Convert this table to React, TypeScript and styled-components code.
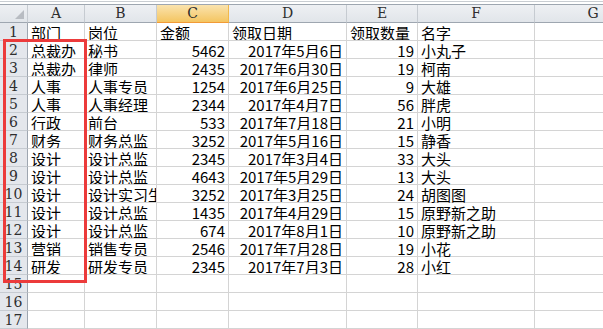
import { Fragment } from "react";
import styled, { createGlobalStyle } from "styled-components";

const GlobalStyle = createGlobalStyle`
  html, body {
    margin: 0;
    padding: 0;
    background: #fff;
    overflow: hidden;
  }
  body {
    font-family: "Noto Sans CJK SC", "Noto Sans", sans-serif;
  }
`;

const COLS = [28, 57, 72, 72, 118, 71, 117, 117];
const LETTERS = ["A", "B", "C", "D", "E", "F", "G"];

type Row = [string, string, string, string, string, string];

const rows: Row[] = [
  ["部门", "岗位", "金额", "领取日期", "领取数量", "名字"],
  ["总裁办", "秘书", "5462", "2017年5月6日", "19", "小丸子"],
  ["总裁办", "律师", "2435", "2017年6月30日", "19", "柯南"],
  ["人事", "人事专员", "1254", "2017年6月25日", "9", "大雄"],
  ["人事", "人事经理", "2344", "2017年4月7日", "56", "胖虎"],
  ["行政", "前台", "533", "2017年7月18日", "21", "小明"],
  ["财务", "财务总监", "3252", "2017年5月16日", "15", "静香"],
  ["设计", "设计总监", "2345", "2017年3月4日", "33", "大头"],
  ["设计", "设计总监", "4643", "2017年5月29日", "13", "大头"],
  ["设计", "设计实习生", "3252", "2017年3月25日", "24", "胡图图"],
  ["设计", "设计总监", "1435", "2017年4月29日", "15", "原野新之助"],
  ["设计", "设计总监", "674", "2017年8月1日", "10", "原野新之助"],
  ["营销", "销售专员", "2546", "2017年7月28日", "19", "小花"],
  ["研发", "研发专员", "2345", "2017年7月3日", "28", "小红"],
];

const TOTAL_ROWS = 17;

const Page = styled.div`
  position: relative;
  width: 603px;
  height: 329px;
  overflow: hidden;
`;

const TopStrip = styled.div`
  height: 5px;
  box-sizing: border-box;
  border-bottom: 1px solid #9ea6b0;
  background: linear-gradient(
    to bottom,
    #fff 0px,
    #fff 1px,
    #c9cdd2 1px,
    #c9cdd2 2px,
    #fff 2px
  );
`;

const Grid = styled.div`
  display: grid;
  grid-template-columns: ${COLS.map((c) => `${c}px`).join(" ")};
  grid-auto-rows: 18px;
`;

const HeadCell = styled.div<{ $selected?: boolean }>`
  box-sizing: border-box;
  border-right: 1px solid ${(p) => (p.$selected ? "#f2b94b" : "#c6cbd1")};
  border-bottom: 1px solid ${(p) => (p.$selected ? "#f29a36" : "#9ea6b0")};
  background: ${(p) =>
    p.$selected
      ? "linear-gradient(to bottom, #fae3ae, #f4c561)"
      : "linear-gradient(to bottom, #eef0f3, #e1e5ea)"};
  color: #2e2e2e;
  font-size: 14px;
  line-height: 17px;
  text-align: center;
  font-family: "DejaVu Serif", "Liberation Serif", serif;
`;

const Corner = styled(HeadCell)`
  position: relative;
  &::after {
    content: "";
    position: absolute;
    right: 3px;
    bottom: 3px;
    width: 0;
    height: 0;
    border-left: 9px solid transparent;
    border-bottom: 9px solid #b8bcc2;
  }
`;

const RowHead = styled.div`
  box-sizing: border-box;
  border-right: 1px solid #9ea6b0;
  border-bottom: 1px solid #c6cbd1;
  background: #e4e7ec;
  color: #2e2e2e;
  font-size: 14px;
  line-height: 18px;
  text-align: center;
  font-family: "DejaVu Serif", "Liberation Serif", serif;
`;

const Cell = styled.div<{ $right?: boolean; $overflow?: boolean }>`
  box-sizing: border-box;
  border-right: 1px solid #d4d4d4;
  border-bottom: 1px solid #d4d4d4;
  padding: 1px 3px 0;
  font-size: 15px;
  line-height: 17px;
  color: #000;
  white-space: nowrap;
  overflow: ${(p) => (p.$overflow ? "visible" : "hidden")};
  text-align: ${(p) => (p.$right ? "right" : "left")};
  position: relative;
  z-index: ${(p) => (p.$overflow ? 1 : 0)};
`;

const Highlight = styled.div`
  position: absolute;
  left: 3px;
  top: 39px;
  width: 84px;
  height: 244px;
  box-sizing: border-box;
  border: 3px solid #ec3b3b;
  pointer-events: none;
`;

const isNumeric = (v: string, i: number, r: number) =>
  r > 0 && (i === 2 || i === 3 || i === 4) && v !== "";

export default function App() {
  const allRows: Row[] = [...rows];
  while (allRows.length < TOTAL_ROWS) allRows.push(["", "", "", "", "", ""]);

  return (
    <Page>
      <GlobalStyle />
      <TopStrip />
      <Grid>
        <Corner />
        {LETTERS.map((l) => (
          <HeadCell key={l} $selected={l === "C"}>
            {l}
          </HeadCell>
        ))}
        {allRows.map((row, r) => (
          <Fragment key={r}>
            <RowHead>{r + 1}</RowHead>
            {row.map((v, i) => (
              <Cell key={i} $right={isNumeric(v, i, r)} $overflow={i === 5}>
                {v}
              </Cell>
            ))}
            <Cell />
          </Fragment>
        ))}
      </Grid>
      <Highlight />
    </Page>
  );
}
